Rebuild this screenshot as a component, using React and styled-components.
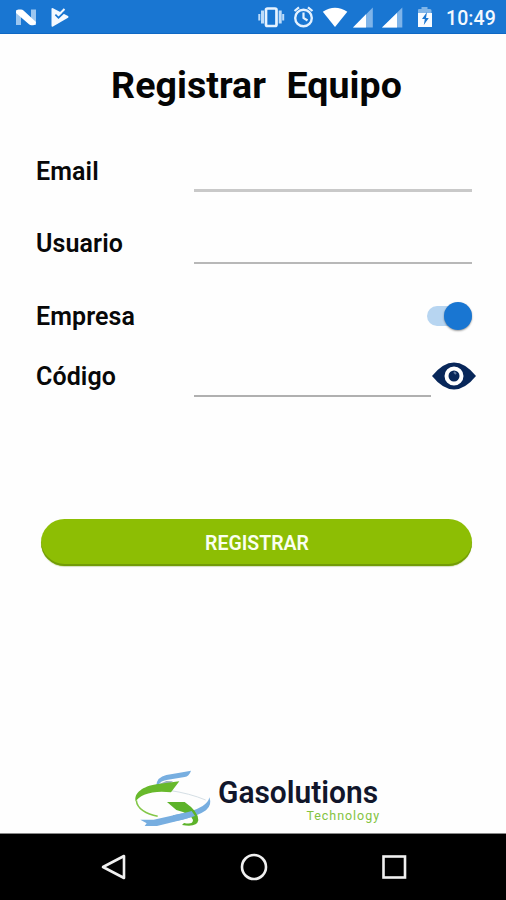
import React from "react";
import styled, { createGlobalStyle } from "styled-components";

const GlobalStyle = createGlobalStyle`
  *, *::before, *::after { box-sizing: border-box; }
  body { margin: 0; background: #fff; font-family: Roboto, sans-serif; }
`;

const Screen = styled.div`
  width: 506px;
  height: 900px;
  display: flex;
  flex-direction: column;
  background: #fefefe;
  overflow: hidden;
`;

const StatusBar = styled.header`
  height: 34px;
  flex: none;
  background: #1976d2;
  border-bottom: 1px solid #0f68c4;
  display: flex;
  justify-content: space-between;
`;

const StatusIcons = styled.svg`
  display: block;
  width: ${(p) => p.$width}px;
  height: 33px;
`;

const StatusEnd = styled.div`
  display: flex;
`;

const Clock = styled.time`
  width: 60px;
  font-size: 19.5px;
  line-height: 37px;
  font-weight: 500;
  letter-spacing: 0.1px;
  color: #f4f9ff;
  white-space: nowrap;
`;

const Content = styled.main`
  flex: 1;
  display: flex;
  flex-direction: column;
  padding: 0 34px 0 36px;
`;

const Title = styled.h1`
  margin: 28px 0 0 5px;
  height: 46px;
  line-height: 46px;
  font-size: 37.5px;
  font-weight: 700;
  letter-spacing: 0.05px;
  word-spacing: 0.9px;
  text-align: center;
  white-space: pre;
  color: #050505;
`;

const Form = styled.form`
  display: grid;
  grid-template-columns: 158px 278px;
  grid-template-rows: 72px 73px 60px 59px;
  margin-top: 46px;
`;

const Label = styled.label`
  font-size: 25px;
  line-height: 36px;
  font-weight: 600;
  letter-spacing: 0.1px;
  color: #080808;
`;

const Input = styled.input`
  width: ${(p) => p.$width || 278}px;
  height: 38px;
  padding: 0 4px;
  border: 0;
  border-bottom: ${(p) => p.$line || 2}px solid ${(p) => p.$color || "#b8b8b8"};
  background: transparent;
  font: 400 22px Roboto, sans-serif;
  outline: none;
`;

const Switch = styled.button`
  justify-self: end;
  width: 45px;
  height: 20px;
  margin-top: 7px;
  padding: 0;
  border: 0;
  border-radius: 10px;
  background: #b7d5f1;
  display: flex;
  align-items: center;
  justify-content: flex-end;
`;

const Thumb = styled.span`
  flex: none;
  width: 28px;
  height: 28px;
  border-radius: 50%;
  background: #1976d2;
  box-shadow: 0 1px 2px rgba(0, 0, 0, 0.4);
`;

const CodeField = styled.div`
  display: flex;
  width: 283px;
`;

const EyeIcon = styled.svg`
  flex: none;
  width: 46px;
  height: 30px;
  margin-top: 2px;
`;

const SubmitButton = styled.button`
  width: 431px;
  height: 47px;
  margin: 101px 0 0 5px;
  padding: 0 0 0 1px;
  border: 0;
  border-radius: 24px;
  background: #8dbe04;
  box-shadow: inset 0 -2px 0 #729b08, 0 1px 1px #d4dfbd;
  color: #fafff0;
  font: 600 19.5px/49px Roboto, sans-serif;
`;

const Brand = styled.footer`
  display: flex;
  height: 72px;
  margin: auto 0 0 89px;
`;

const BrandMark = styled.svg`
  flex: none;
  width: 93px;
  height: 72px;
`;

const BrandText = styled.div`
  width: 161px;
  display: flex;
  flex-direction: column;
  padding-top: 14px;
`;

const BrandName = styled.span`
  width: max-content;
  font: 600 32px/34px Roboto, sans-serif;
  color: #11162b;
  white-space: nowrap;
  transform: scaleX(0.935);
  transform-origin: left;
`;

const BrandTagline = styled.span`
  align-self: flex-end;
  font: 400 12.5px/14px Roboto, sans-serif;
  letter-spacing: 0.95px;
  margin-right: -1px;
  color: #83c341;
`;

const NavBar = styled.nav`
  height: 67px;
  flex: none;
  border-top: 1px solid #888;
  background: #000;
  display: flex;
  justify-content: center;
  align-items: center;
  gap: 110px;
  padding-left: 1px;
`;

const NavIcon = styled.svg`
  width: 30px;
  height: 30px;
  fill: none;
  stroke: #f0f0f0;
  stroke-width: 2.6;
`;

function NotificationIcons() {
  return (
    <StatusIcons $width={80} viewBox="0 0 80 33">
      <path d="M16 10h5v15h-5zM31 9.5h5V25h-5z" fill="#9bc6f0" />
      <path d="M16 11.5q.5-2 2.5-2H21q1.5 0 2.5 1L36 22q-.5 3.3-3 3.3h-1.5q-1.5 0-2.5-1L16 13z" fill="#fff" />
      <path d="M51.5 9q0-1.5 1.5-.8l15 7.8q1.3 1 0 1.8L53 26.5q-1.5.7-1.5-1z" fill="#f4f9ff" />
      <path d="m55.5 14.5 3 3 8.5-8" fill="none" stroke="#1976d2" strokeWidth="2" />
      <path d="m56 12.5 2.5 2.5 6-6" fill="none" stroke="#f4f9ff" strokeWidth="2" />
    </StatusIcons>
  );
}

function SystemIcons() {
  return (
    <StatusIcons $width={193} viewBox="253 0 193 33">
      <rect x="266" y="8.5" width="10.5" height="17.5" rx="1.5" fill="none" stroke="#e7f3ff" strokeWidth="2.7" />
      <path d="M262.5 10.5v13M280.2 10.5v13" stroke="#bddcfa" strokeWidth="3" />
      <path d="M259.3 14v6.5M283.2 14v6.5" stroke="#bddcfa" strokeWidth="2" />
      <circle cx="303.5" cy="18" r="8.3" fill="none" stroke="#e3f1ff" strokeWidth="2.4" />
      <path d="M303.5 12.5V18l4 2.5M294.5 11l4.5-3.7M312.5 11 308 7.3" fill="none" stroke="#e3f1ff" strokeWidth="2.2" />
      <path d="M322.8 11.8Q335 3.5 347.3 11.8L335 27z" fill="#fff" />
      <path d="M372.8 7.5v20H353z" fill="#7fb4e9" />
      <path d="M366 14.3v13.2H353z" fill="#fff" />
      <path d="M402.3 7.5v20H382z" fill="#7fb4e9" />
      <path d="M397 13v14.5H382z" fill="#fff" />
      <path d="M418 13v-3q0-1 1-1h2.5V7h6v2h2.5q1.5 0 1.5 1.5V13z" fill="#80b5e8" />
      <path d="M418 13h14v14h-14z" fill="#f7fbff" />
      <path d="m427 12-5 7h2.8l-1 6 5-7H426z" fill="#1976d2" />
    </StatusIcons>
  );
}

function GasolutionsMark() {
  return (
    <BrandMark viewBox="0 0 279 216" aria-hidden="true">
      <g transform="translate(14 13)">
        <path d="M80 60Q82 35 110 29L150 22 184 16Q178 34 165 35L115 43Q92 46 86 59z" fill="#77aee0" />
        <path d="M84 58 110 47 130 48 116 58z" fill="#9aaebd" />
        <path d="M118 75Q180 84 228 104" fill="none" stroke="#d5dfe5" strokeWidth="3" />
        <path d="M18 108C12 83 40 63 80 57L149 48 124 81Q78 75 44 88 24 97 18 108z" fill="#68b92c" />
        <path d="M20 105C22 130 50 147 84 153" fill="none" stroke="#83c748" strokeWidth="4.5" />
        <path d="M32 163H72L132 150Q190 140 219 122 237 110 239 96 248 119 229 135 205 152 158 163L82 182H45L51 174z" fill="#77aee0" />
        <path d="M112 110H165Q207 139 206 165 202 187 157 179L163 173Q190 179 190 164 184 145 140 134z" fill="#5db32a" />
        <path d="M130 150Q166 142 186 137L196 152 158 163 126 169z" fill="#77aee0" />
      </g>
    </BrandMark>
  );
}

export default function App() {
  return (
    <>
      <GlobalStyle />
      <Screen>
        <StatusBar>
          <NotificationIcons />
          <StatusEnd>
            <SystemIcons />
            <Clock>10:49</Clock>
          </StatusEnd>
        </StatusBar>
        <Content>
          <Title>{"Registrar  Equipo"}</Title>
          <Form id="device-form">
            <Label htmlFor="email">Email</Label>
            <Input id="email" type="email" $line={3} $color="#c9c9c9" />
            <Label htmlFor="user">Usuario</Label>
            <Input id="user" />
            <Label>Empresa</Label>
            <Switch type="button" role="switch" aria-checked="true" aria-label="Empresa">
              <Thumb />
            </Switch>
            <Label htmlFor="code">Código</Label>
            <CodeField>
              <Input id="code" $width={237} $color="#b0b0b0" />
              <EyeIcon viewBox="0 0 46 30">
                <path d="M1 15Q12 1.5 23 1.5T45 15Q34 28.5 23 28.5T1 15z" fill="#08275a" />
                <circle cx="23" cy="15" r="7.5" fill="#08275a" stroke="#fff" strokeWidth="4" />
                <path d="m23 11 2 2" stroke="#60799f" strokeWidth="2" />
              </EyeIcon>
            </CodeField>
          </Form>
          <SubmitButton type="submit" form="device-form">REGISTRAR</SubmitButton>
          <Brand>
            <GasolutionsMark />
            <BrandText>
              <BrandName>Gasolutions</BrandName>
              <BrandTagline>Technology</BrandTagline>
            </BrandText>
          </Brand>
        </Content>
        <NavBar>
          <NavIcon viewBox="0 0 30 30"><path d="M25 4v22L4 15z" strokeLinejoin="round" /></NavIcon>
          <NavIcon viewBox="0 0 30 30"><circle cx="15" cy="15" r="12" /></NavIcon>
          <NavIcon viewBox="0 0 30 30"><rect x="4.5" y="4.5" width="21.5" height="21" /></NavIcon>
        </NavBar>
      </Screen>
    </>
  );
}
